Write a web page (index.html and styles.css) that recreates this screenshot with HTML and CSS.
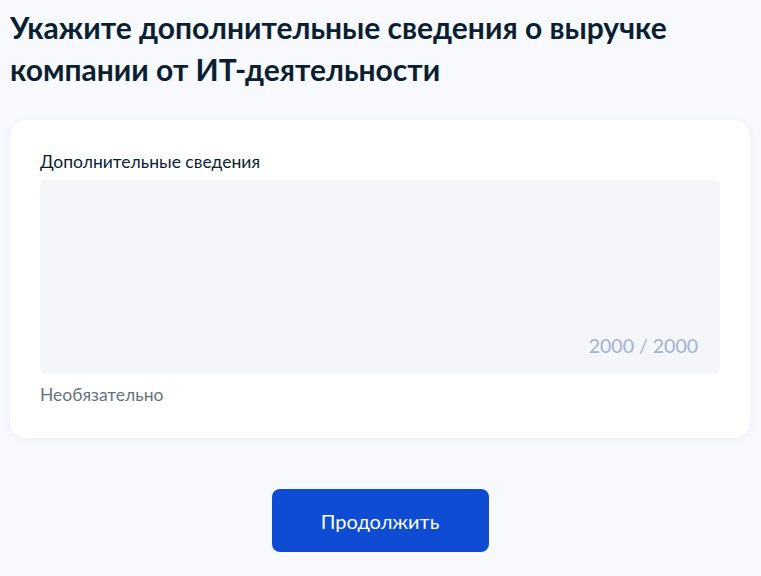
FILE: index.html
```html
<!DOCTYPE html>
<html lang="ru">

<head>
    <meta charset="UTF-8">
    <meta name="viewport" content="width=device-width, initial-scale=1.0">
    <title>Дополнительные сведения</title>
    <link rel="stylesheet" href="styles.css">
</head>

<body>
    <h1 class="title">Укажите дополнительные сведения о выручке компании от ИТ-деятельности</h1>

    <div class="card">
        <label class="field-label" for="extra">Дополнительные сведения</label>
        <div class="textarea-box">
            <textarea id="extra" class="textarea"></textarea>
            <span class="counter">2000 / 2000</span>
        </div>
        <div class="hint">Необязательно</div>
    </div>

    <div class="actions">
        <button class="btn" type="button">Продолжить</button>
    </div>
</body>

</html>
```

FILE: styles.css
```css
body {
    margin: 0;
    padding: 0 11px 0 10px;
    background-color: #f8f9fd;
    color: #0b1f33;
    font-family: Lato, "Open Sans", sans-serif;
}

.title {
    margin: 0;
    padding-top: 6px;
    font-size: 30px;
    line-height: 42px;
    font-weight: 700;
    max-width: 680px;
}

.card {
    margin-top: 30px;
    background-color: #ffffff;
    border-radius: 16px;
    padding: 30px 30px 33px 30px;
    box-shadow: 0 2px 10px rgba(30, 60, 140, 0.06);
}

.field-label {
    display: block;
    font-size: 17.5px;
    line-height: 24px;
    margin-bottom: 6px;
}

.textarea-box {
    position: relative;
    height: 193px;
    background-color: #f5f6fa;
    border-radius: 6px;
}

.textarea {
    width: 100%;
    height: 100%;
    box-sizing: border-box;
    border: none;
    background: transparent;
    resize: none;
    outline: none;
    padding: 12px 16px;
    font-family: inherit;
    font-size: 17.5px;
}

.counter {
    position: absolute;
    right: 22px;
    bottom: 16px;
    font-size: 19.5px;
    color: #a3b2d1;
}

.hint {
    margin-top: 12px;
    font-size: 17.5px;
    line-height: 20px;
    color: #66727f;
}

.actions {
    display: flex;
    justify-content: center;
    margin-top: 51px;
}

.btn {
    width: 217px;
    height: 63px;
    border: none;
    border-radius: 8px;
    background-color: #0d4cd3;
    color: #ffffff;
    font-family: inherit;
    font-size: 20px;
    cursor: pointer;
}
```
